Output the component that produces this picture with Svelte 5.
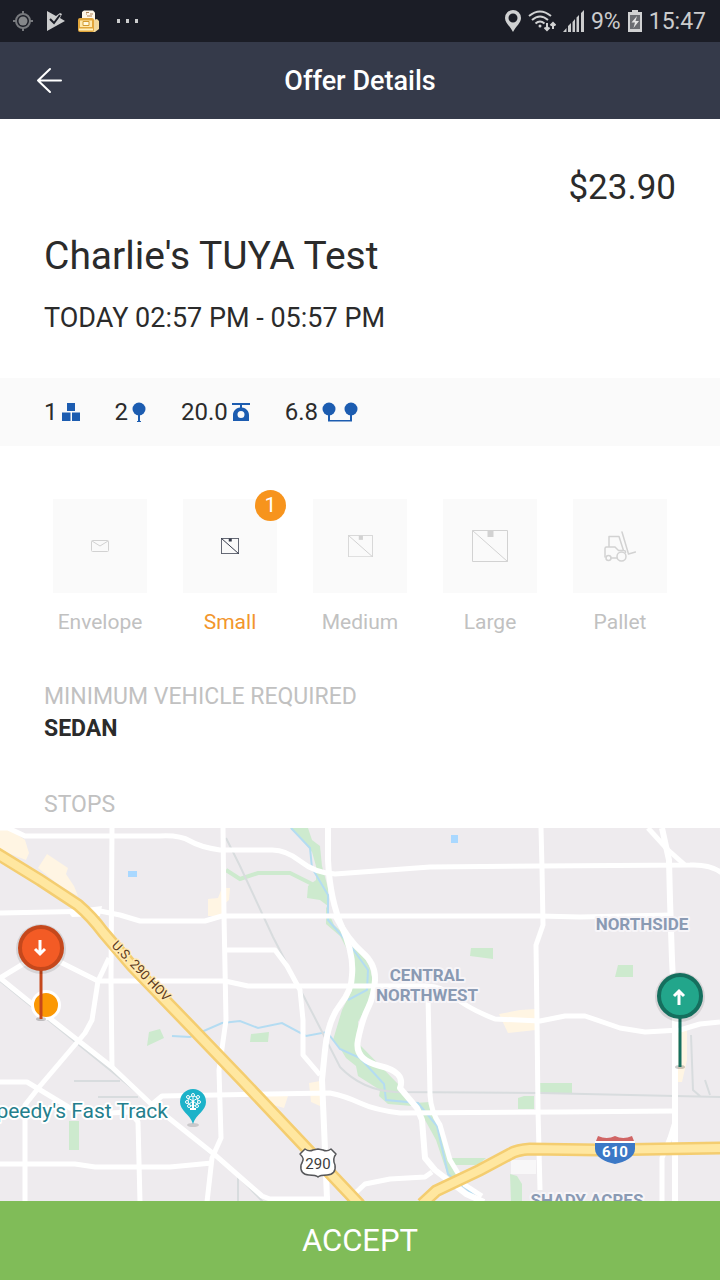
<script>
    const offer = {
        price: "$23.90",
        name: "Charlie's TUYA Test",
        time: "TODAY 02:57 PM - 05:57 PM",
        vehicle: "SEDAN",
    };

    // package sizes, box is the width of the drawn box
    const sizes = [
        { name: "Envelope", count: 0 },
        { name: "Small", count: 1, box: 18 },
        { name: "Medium", count: 0, box: 25 },
        { name: "Large", count: 0, box: 36 },
        { name: "Pallet", count: 0 },
    ];

    // white roads on the map
    const roads = [
        "M0 828H8L25 836H160Q180 835 190 841T220 850H270Q285 849 300 861T335 874L430 867L540 866L690 865Q710 864 722 873",
        "M112 828L111 980L112 1068",
        "M223 828L224 915L226 1020L219 1070L221 1138L212 1158L207 1202",
        "M0 913L100 911L120 915L140 921H205L222 916H540L580 917L672 915",
        "M0 978L28 961L60 962L98 981H225L248 986H425Q443 986 455 997T495 1019L540 1021L565 1016H585L620 1028L645 1032L680 1030L700 1024L720 1022",
        "M0 978L52 1020L112 1067L150 1103L215 1155L262 1196L270 1199H330",
        "M109 958L98 981L92 1020L85 1033L40 1086L25 1105V1202",
        "M0 1082H27L70 1108L110 1113L130 1112L138 1122L140 1202",
        "M0 1164H75L95 1167H170L212 1163",
        "M150 1106L162 1096L330 1093Q345 1096 360 1103T400 1113L560 1112L672 1111",
        "M225 950H275L287 966L300 990L303 1020V1055L320 1075",
        "M541 828L542 868L543 925L536 945L537 1020L538 1110L540 1190",
        "M648 828L668 850L685 865",
        "M675 1122L670 1138L662 1158V1202",
        "M428 995L430 1095Q431 1112 440 1125L450 1160L465 1185L482 1196",
        "M432 1172L425 1177L390 1179L365 1184L350 1198",
    ];

    const mainRoads = [
        "M328 828L328 860Q330 900 342 927T352 975Q352 990 340 1005T325 1050L322 1080L325 1150L327 1199",
        "M335 915Q348 940 362 952T375 980T368 1008T358 1040T380 1066T400 1088L417 1108L422 1120L425 1158L435 1170L466 1194L484 1202",
        "M662 828L669 860L670 900L672 960L675 1020V1202",
    ];

    const greens = [
        "M290 828H308L312 840L320 846L322 866L328 888L328 906L320 900L307 898L308 886L316 880L316 866L312 852L300 838Z",
        "M326 906L334 925L350 940L362 952L370 968L374 985L368 1004L358 1022L360 1045L398 1084L415 1103L430 1102L440 1125L450 1160L462 1182L448 1176L436 1140L425 1120L412 1106L388 1104L379 1096L380 1090L358 1076L356 1066L346 1058L340 1048L333 1040L342 1010L352 990L350 955L340 936L326 924Z",
        "M471 948H493V959L470 956Z",
        "M618 965H633V977H615Z",
        "M540 1083H572V1094H540Z",
        "M518 1098L524 1096H534V1109H518Z",
        "M147 1046L149 1032L160 1029L164 1038Z",
        "M251 1034L269 1032L268 1042H250Z",
        "M69 1121H79V1150H69Z",
        "M450 1158H486L478 1165H452Z",
        "M510 1174L517 1176L522 1184V1202H511Z",
    ];

    const sands = [
        "M0 828H8L25 840L29 853L26 860L0 850Z",
        "M47 854L68 868L66 874L74 886L78 896L60 886L38 868Z",
        "M208 899L218 898L222 888H230L229 900L222 906V916H208Z",
        "M499 1014L520 1010L536 1009V1030L508 1033Z",
        "M309 1083L320 1081V1106L311 1102Z",
        "M268 1096H288L284 1108L270 1104Z",
        "M678 1030H687V1060L682 1082H677Z",
    ];

    const highway = "M-4 853L40 880L78 905Q92 917 103 932L132 966L190 1026L240 1078L310 1152L360 1205";
    const loop = "M422 1204L436 1191L480 1170L510 1154Q516 1150 530 1149L600 1150L722 1148";
</script>

{#snippet boxIcon(width)}
    <svg class="box" style:width="{width}px" viewBox="0 0 36 32" fill="none" stroke="currentColor">
        <path d="M.5 .5h35v31H.5zM.5 .5l35 31" vector-effect="non-scaling-stroke" />
        <path d="M15.5 1h6v6h-6z" fill="currentColor" stroke="none" />
    </svg>
{/snippet}

{#snippet pin(x, y, name, arrow)}
    <g class="pin {name}" transform="translate({x} {y})">
        <ellipse cx="0" cy="71" rx="5" ry="2" fill="#000" opacity=".2" />
        <path class="stem" d="M0 20V71" />
        <circle class="glow" r="25" cy="1" />
        <circle class="disc" r="21" />
        <path class="arrow" d={arrow} />
    </g>
{/snippet}

<div class="screen">
    <div class="status">
        <div class="status-group">
            <svg width="20" height="20" viewBox="0 0 20 20" fill="none" stroke="#77797d" stroke-width="2">
                <circle cx="10" cy="10" r="7" />
                <circle cx="10" cy="10" r="4.5" fill="#85878a" stroke="none" />
                <path d="M10 0v3M10 17v3M0 10h3M17 10h3" />
            </svg>
            <svg width="19" height="20" viewBox="0 0 19 20">
                <path d="M1 0 10 5 14 2 16 3 14 7 19 10 1 20Z" fill="#cbcccd" />
                <path d="m4 8 4 4L14 4" fill="none" stroke="#1b1d26" stroke-width="2" />
            </svg>
            <svg width="21" height="23" viewBox="0 0 21 23">
                <path d="M4 2 6 .5h9l2 2V10H4z" fill="#fff7e8" />
                <path d="M8 2.5h3M12 4h3M9 6h5M8 4h1" stroke="#b4875a" stroke-width="1" />
                <path d="m15 10 4-1 2 2v8l-4 3h-3z" fill="#f2d89b" />
                <rect x="0" y="8" width="16" height="14" rx="2" fill="#e2a63b" />
                <path d="M2 10.5h12V17H2z" fill="#ffe9ac" />
                <path d="M5 11.5h6v4H5z" fill="#fff9df" stroke="#d29a32" />
                <path d="M1 19.5h14" stroke="#fff0bd" stroke-width="2" />
            </svg>
            <svg class="more" width="24" height="4" viewBox="0 0 24 4" fill="#cbcccd">
                <path d="M1 0h3v4H1zM10 0h3v4h-3zM19 0h3v4h-3z" />
            </svg>
        </div>
        <div class="status-group right">
            <svg width="16" height="22" viewBox="0 0 16 22">
                <path d="M8 0a8 8 0 0 0-8 8c0 5 5 8 8 14 3-6 8-9 8-14a8 8 0 0 0-8-8m0 3.500a4.500 4.500 0 1 1 0 9 4.500 4.500 0 0 1 0-9" fill="#d0d1d2" />
            </svg>
            <svg width="28" height="22" viewBox="0 0 28 22" fill="none" stroke="#d0d1d2" stroke-width="2">
                <path d="M1 6q11-9 22 0M4 10q8-7 16 0M7.500 13.500q4.500-4 9 0" />
                <circle cx="12" cy="16" r="1.500" fill="#d0d1d2" stroke="none" />
                <path d="M19 13v7M16.500 17.500l2.500 2.500 2.500-2.500M25 19v-6M22.500 15.500 25 13l2.500 2.500" />
            </svg>
            <svg width="21" height="22" viewBox="0 0 21 22" fill="#cbcccd">
                <path d="M0 22l3.500-4v4zM5 16l3-3v9H5zM9.500 12l2.500-3v13H9.500zM13.500 7.500 16 5v17h-2.500zM18 3l3-3v22h-3z" />
            </svg>
            <span>9%</span>
            <svg width="14" height="22" viewBox="0 0 14 22">
                <path d="M4 0h6v2h4v20H0V2h4z" fill="#d0d1d2" />
                <path d="M2 5h10v14H2z" fill="#6b6d72" />
                <path d="M9 6 3.500 12.500H7L5.500 18 11 11H7.500z" fill="#e4e4e4" />
            </svg>
            <span>15:47</span>
        </div>
    </div>

    <header>
        <button class="back" type="button" aria-label="Back">
            <svg width="27" height="27" viewBox="0 0 27 27" fill="none" stroke="#fff" stroke-width="2" stroke-linecap="round" stroke-linejoin="round">
                <path d="M25 13.500H2M14 2 2 13.500 14 25" />
            </svg>
        </button>
        <h1>Offer Details</h1>
    </header>

    <main>
        <section class="summary">
            <p class="price">{offer.price}</p>
            <h2>{offer.name}</h2>
            <p class="time">{offer.time}</p>
        </section>

        <ul class="stats">
            <li>
                1
                <svg width="18" height="18" viewBox="0 0 18 18">
                    <path d="M5 0h8v8H5zM0 9.500h8.500V18H0zM10 9.500h8V18h-8z" />
                </svg>
            </li>
            <li>
                2
                <svg width="14" height="20" viewBox="0 0 14 20">
                    <circle cx="7" cy="7" r="6.500" />
                    <path d="M6 13h2v6h1v1H5v-1h1z" />
                </svg>
            </li>
            <li>
                20.0
                <svg width="18" height="18" viewBox="0 0 18 18">
                    <path d="M0 0h18v2h-8v2.500C14 5 17 8 17 12v6H1v-6c0-4 3-7 7-7.500V2H0zM9 8a3.500 3.500 0 1 0 0 7 3.500 3.500 0 0 0 0-7" fill-rule="evenodd" />
                </svg>
            </li>
            <li>
                6.8
                <svg width="36" height="20" viewBox="0 0 36 20">
                    <circle cx="7" cy="7" r="6.500" />
                    <circle cx="29" cy="7" r="6.500" />
                    <path d="M6 12h2v6h20v-6h2v7.500H6z" />
                </svg>
            </li>
        </ul>

        <ul class="sizes">
            {#each sizes as size}
                <li class:active={size.count > 0}>
                    <div class="tile">
                        {#if size.box}
                            {@render boxIcon(size.box)}
                        {:else if size.name === "Envelope"}
                            <svg width="18" height="12" viewBox="0 0 18 12" fill="none" stroke="currentColor">
                                <rect x=".5" y=".5" width="17" height="11" rx="1" />
                                <path d="m1 1 8 5 8-5" />
                            </svg>
                        {:else}
                            <svg width="32" height="31" viewBox="0 0 32 31" fill="none" stroke="currentColor" stroke-width="1.500" stroke-linejoin="round" stroke-linecap="round">
                                <path d="M5 16V5.500h10l4.500 14M1 26V17.500q0-1.500 1.500-1.500H11l3.500 3.500H20q1.500 0 1.500 2M7 27h6" />
                                <circle cx="4.500" cy="27" r="2.500" />
                                <circle cx="17.500" cy="25.500" r="4.500" />
                                <path d="m18 1 6.500 22 7-2" />
                            </svg>
                        {/if}
                        {#if size.count}
                            <span class="badge">{size.count}</span>
                        {/if}
                    </div>
                    {size.name}
                </li>
            {/each}
        </ul>

        <section class="details">
            <h3>MINIMUM VEHICLE REQUIRED</h3>
            <p class="vehicle">{offer.vehicle}</p>
            <h3 class="stops">STOPS</h3>
        </section>

        <svg class="map" viewBox="0 828 720 373" preserveAspectRatio="xMidYMid slice">
            {#each sands as d}
                <path {d} fill="#fff5e3" />
            {/each}
            {#each greens as d}
                <path {d} fill="#cdeace" />
            {/each}
            <path d="M511 1160h25v14h-25z" fill="#f8f7f8" />
            <path d="M128 871h9v6h-9zM451 835h7v8h-7z" fill="#a9d8ff" />

            <!-- creeks -->
            <path d="M226 870L240 879L258 873H290L316 886" fill="none" stroke="#cdeace" stroke-width="4" />
            <path class="water" d="M291 828L310 848L312 868L328 895V920L350 945L368 970L367 990L348 1000M172 1036L190 1037L222 1023L240 1021L258 1028L282 1023L306 1036L327 1032L340 1049L360 1058L384 1084L386 1100L418 1103L437 1126L448 1174L480 1200" />

            <!-- railways -->
            <path class="rail" d="M226 838L240 866L273 937L316 1020L340 1067Q362 1090 395 1092L540 1093L720 1097M74 1081H120M98 1097H138M691 1035L693 1090L700 1096M705 1080L710 1095M0 981L110 1070L240 1178L263 1202M238 1176V1202" />

            {#each roads as d}
                <path {d} class="road" />
            {/each}
            {#each mainRoads as d}
                <path {d} class="road wide" />
            {/each}
            <path d="M68 912L86 908L102 906L100 916L72 917Z" fill="#fff" />

            <path d={highway} class="highway-edge" />
            <path d={highway} class="highway" />
            <path d={loop} class="highway-edge" />
            <path d={loop} class="highway" />

            <text class="road-name" transform="translate(111 946) rotate(46)">U.S. 290 HOV</text>
            <text class="area" x="427" y="981">CENTRAL</text>
            <text class="area" x="427" y="1001">NORTHWEST</text>
            <text class="area" x="642" y="930">NORTHSIDE</text>
            <text class="area" x="587" y="1206">SHADY ACRES</text>
            <text class="place" x="168" y="1118">Speedy's Fast Track</text>

            <!-- place marker -->
            <ellipse cx="193" cy="1125" rx="6" ry="2" fill="#000" opacity=".15" />
            <path d="M193 1089a13 13 0 0 0-13 13c0 9 10 12 13 22 3-10 13-13 13-22a13 13 0 0 0-13-13" fill="#1cb2c9" />
            <g fill="none" stroke="#fff">
                <circle cx="193" cy="1101" r="5" />
                <path d="M193 1101v8M190 1109h6" stroke-width="2" />
                <path d="M193 1101l-5-3M193 1101l5-3M193 1101v-5M193 1101l-5 4M193 1101l5 4" />
            </g>
            <g fill="#1cb2c9" stroke="#fff">
                <circle cx="193" cy="1095" r="1.500" />
                <circle cx="188" cy="1097" r="1.500" />
                <circle cx="198" cy="1097" r="1.500" />
                <circle cx="187" cy="1102" r="1.500" />
                <circle cx="199" cy="1102" r="1.500" />
                <circle cx="189" cy="1106" r="1.500" />
                <circle cx="197" cy="1106" r="1.500" />
            </g>

            <!-- route shields -->
            <path d="M305 1149q4 3 8 1l5-1 5 1q4 2 8-1l5 5q-4 5-1 11c1 6-2 10-8 10-4 0-7 0-9 2-2-2-5-2-9-2-6 0-9-4-8-10 3-6 3-7-1-11z" fill="#fff" stroke="#56575a" stroke-width="1.500" stroke-linejoin="round" />
            <text class="shield" x="318" y="1169">290</text>
            <path d="M596 1141l2-5q9 4 17 0 8 4 17 0l2 5z" fill="#d06565" />
            <path d="M595 1141h40v2h-40z" fill="#fff" />
            <path d="M595 1143h40v6c0 8-10 13-20 15-10-2-20-7-20-15z" fill="#3b78c6" />
            <text class="shield interstate" x="615" y="1157">610</text>

            <circle cx="46" cy="1005" r="13.500" fill="#fb9804" stroke="#fff" stroke-width="3" />
            {@render pin(41, 948, "drop", "M-1 -8V6M-6 1L-1 6L4 1")}
            {@render pin(680, 996, "pickup", "M-1 9V-5M-6 0L-1 -5L4 0")}
        </svg>
    </main>

    <button class="accept" type="button">ACCEPT</button>
</div>

<style>
    :global(body) {
        margin: 0;
        background-color: #fff;
    }

    .screen {
        font-family: Roboto, "Liberation Sans", sans-serif;
        color: #2b2b2b;
        display: flex;
        flex-direction: column;
    }

    h1, h2, h3, p, ul {
        margin: 0;
        padding: 0;
        font-weight: 400;
    }

    ul {
        list-style: none;
    }

    svg {
        display: block;
        flex-shrink: 0;
    }

    .status {
        height: 42px;
        padding: 0 14px 0 13px;
        display: flex;
        align-items: center;
        justify-content: space-between;
        background-color: #1b1d26;
        color: #cbcccd;
        font-size: 23px;
    }

    .status-group {
        display: flex;
        align-items: center;
        gap: 13px;
    }

    .status-group.right {
        gap: 7px;
    }

    .more {
        margin-left: 4px;
    }

    header {
        height: 77px;
        padding: 0 28px;
        display: grid;
        grid-template-columns: 43px 1fr 43px;
        align-items: center;
        background-color: #353a4a;
        color: #fff;
    }

    h1 {
        font-size: 27px;
        font-weight: 500;
        line-height: 32px;
        text-align: center;
    }

    button {
        border: none;
        font-family: inherit;
        cursor: pointer;
    }

    .back {
        padding: 8px;
        background: none;
    }

    .summary {
        padding: 45px 44px 44px;
        display: flex;
        flex-direction: column;
    }

    .price {
        font-size: 35px;
        line-height: 48px;
        text-align: right;
    }

    h2 {
        margin-top: 20px;
        font-size: 39px;
        line-height: 48px;
    }

    .time {
        margin-top: 22px;
        font-size: 27px;
        line-height: 32px;
    }

    .stats {
        height: 68px;
        padding: 0 44px;
        display: flex;
        align-items: center;
        gap: 35px;
        background-color: #fafafa;
        font-size: 24px;
    }

    .stats li {
        display: flex;
        align-items: center;
        gap: 4px;
    }

    .stats svg {
        fill: #1c5cb0;
    }

    .sizes {
        padding: 53px 35px 0;
        display: grid;
        grid-template-columns: repeat(5, 1fr);
        color: #c1c1c1;
        font-size: 21px;
        line-height: 24px;
    }

    .sizes li {
        display: flex;
        flex-direction: column;
        align-items: center;
        gap: 17px;
    }

    .sizes .active {
        color: #f2962c;
    }

    .tile {
        position: relative;
        width: 94px;
        height: 94px;
        display: flex;
        align-items: center;
        justify-content: center;
        background-color: #fafafa;
        color: #d2d2d2;
    }

    .active .tile {
        color: #353a4a;
    }

    .badge {
        position: absolute;
        top: -9px;
        right: -9px;
        width: 31px;
        border-radius: 50%;
        background-color: #f7941d;
        color: #fff;
        line-height: 31px;
        text-align: center;
    }

    .details {
        padding: 47px 44px 7px;
        font-size: 23px;
        line-height: 32px;
    }

    h3 {
        color: #c1c1c1;
        font-size: 23px;
    }

    .vehicle {
        font-weight: 700;
    }

    .stops {
        margin-top: 44px;
    }

    .map {
        width: 100%;
        height: 373px;
        background-color: #eeebee;
    }

    .road {
        fill: none;
        stroke: #fff;
        stroke-width: 5;
        stroke-linejoin: round;
    }

    .wide {
        stroke-width: 6;
    }

    .rail {
        fill: none;
        stroke: #d8dcde;
        stroke-width: 2;
    }

    .water {
        fill: none;
        stroke: #b4dcf2;
        stroke-width: 2;
    }

    .highway-edge {
        fill: none;
        stroke: #f4cd70;
        stroke-width: 13;
    }

    .highway {
        fill: none;
        stroke: #ffe7a0;
        stroke-width: 8;
    }

    .map text {
        paint-order: stroke;
        stroke-linejoin: round;
    }

    .road-name {
        font-size: 13px;
        fill: #5d3b21;
        stroke: #ffe9b3;
        stroke-width: 3;
    }

    .area {
        font-size: 17px;
        font-weight: 700;
        text-anchor: middle;
        fill: #8a9ab3;
        stroke: #f7f5f8;
        stroke-width: 4;
    }

    .place {
        font-size: 21px;
        text-anchor: end;
        fill: #247f8d;
        stroke: #fff;
        stroke-width: 4;
    }

    .shield {
        font-size: 15px;
        text-anchor: middle;
        fill: #3c3c3c;
    }

    .interstate {
        font-weight: 700;
        fill: #fff;
    }

    .glow {
        fill: #000;
        opacity: 0.1;
    }

    .disc {
        stroke-width: 4;
    }

    .stem {
        stroke-width: 3;
    }

    .arrow {
        fill: none;
        stroke: #fff;
        stroke-width: 3;
    }

    .drop .disc {
        fill: #f35b25;
        stroke: #c5481c;
    }

    .drop .stem {
        stroke: #c5481c;
    }

    .pickup .disc {
        fill: #22a68b;
        stroke: #156f5e;
    }

    .pickup .stem {
        stroke: #156f5e;
    }

    .accept {
        height: 79px;
        background-color: #80bc58;
        color: #fff;
        font-size: 31px;
    }
</style>
